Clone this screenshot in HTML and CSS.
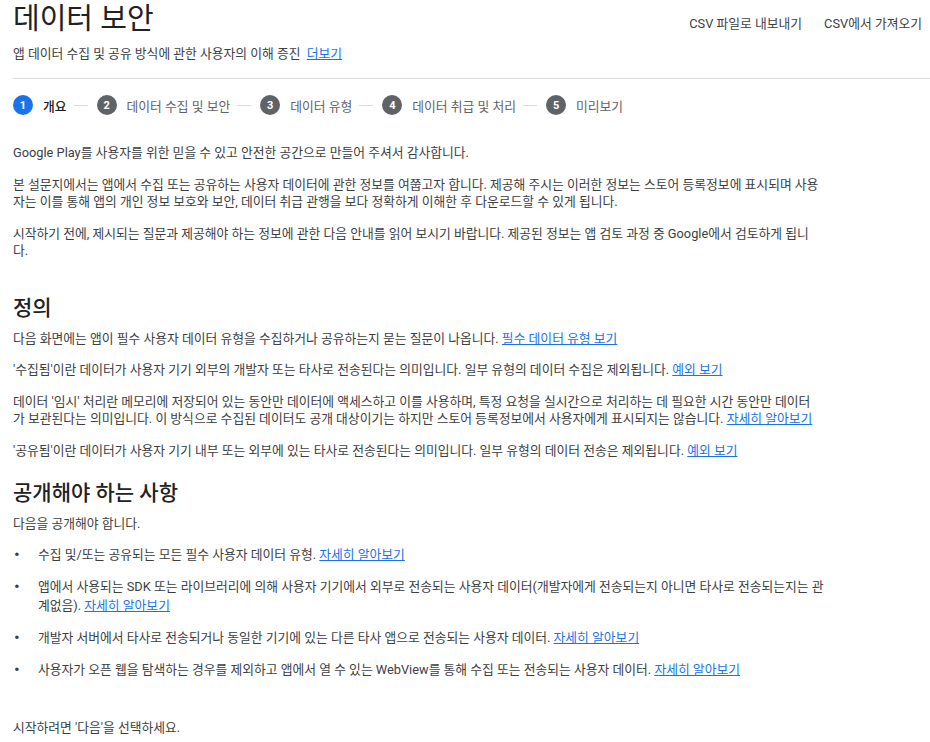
FILE: index.html
```html
<!DOCTYPE html>
<html lang="ko">
<head>
    <meta charset="UTF-8">
    <meta name="viewport" content="width=device-width, initial-scale=1.0">
    <title>데이터 보안</title>
    <link rel="stylesheet" href="styles.css">
</head>
<body>
    <div class="page">
        <header class="page-header">
            <div class="title-block">
                <h1 class="page-title">데이터 보안</h1>
                <p class="subtitle">앱 데이터 수집 및 공유 방식에 관한 사용자의 이해 증진 <a href="#">더보기</a></p>
            </div>
            <div class="header-actions">
                <a href="#" class="action-link">CSV 파일로 내보내기</a>
                <a href="#" class="action-link">CSV에서 가져오기</a>
            </div>
        </header>

        <nav class="stepper">
            <div class="step active"><span class="step-num">1</span><span class="step-label">개요</span></div>
            <span class="step-line"></span>
            <div class="step"><span class="step-num">2</span><span class="step-label">데이터 수집 및 보안</span></div>
            <span class="step-line"></span>
            <div class="step"><span class="step-num">3</span><span class="step-label">데이터 유형</span></div>
            <span class="step-line"></span>
            <div class="step"><span class="step-num">4</span><span class="step-label">데이터 취급 및 처리</span></div>
            <span class="step-line"></span>
            <div class="step"><span class="step-num">5</span><span class="step-label">미리보기</span></div>
        </nav>

        <main class="content">
            <p>Google Play를 사용자를 위한 믿을 수 있고 안전한 공간으로 만들어 주셔서 감사합니다.</p>
            <p>본 설문지에서는 앱에서 수집 또는 공유하는 사용자 데이터에 관한 정보를 여쭙고자 합니다. 제공해 주시는 이러한 정보는 스토어 등록정보에 표시되며 사용자는 이를 통해 앱의 개인 정보 보호와 보안, 데이터 취급 관행을 보다 정확하게 이해한 후 다운로드할 수 있게 됩니다.</p>
            <p>시작하기 전에, 제시되는 질문과 제공해야 하는 정보에 관한 다음 안내를 읽어 보시기 바랍니다. 제공된 정보는 앱 검토 과정 중 Google에서 검토하게 됩니다.</p>

            <h2 class="section-title first">정의</h2>
            <p>다음 화면에는 앱이 필수 사용자 데이터 유형을 수집하거나 공유하는지 묻는 질문이 나옵니다. <a href="#">필수 데이터 유형 보기</a></p>
            <p>'수집됨'이란 데이터가 사용자 기기 외부의 개발자 또는 타사로 전송된다는 의미입니다. 일부 유형의 데이터 수집은 제외됩니다. <a href="#">예외 보기</a></p>
            <p>데이터 '임시' 처리란 메모리에 저장되어 있는 동안만 데이터에 액세스하고 이를 사용하며, 특정 요청을 실시간으로 처리하는 데 필요한 시간 동안만 데이터가 보관된다는 의미입니다. 이 방식으로 수집된 데이터도 공개 대상이기는 하지만 스토어 등록정보에서 사용자에게 표시되지는 않습니다. <a href="#">자세히 알아보기</a></p>
            <p>'공유됨'이란 데이터가 사용자 기기 내부 또는 외부에 있는 타사로 전송된다는 의미입니다. 일부 유형의 데이터 전송은 제외됩니다. <a href="#">예외 보기</a></p>

            <h2 class="section-title">공개해야 하는 사항</h2>
            <p class="list-intro">다음을 공개해야 합니다.</p>
            <ul class="bullets">
                <li><span>수집 및/또는 공유되는 모든 필수 사용자 데이터 유형. <a href="#">자세히 알아보기</a></span></li>
                <li><span>앱에서 사용되는 SDK 또는 라이브러리에 의해 사용자 기기에서 외부로 전송되는 사용자 데이터(개발자에게 전송되는지 아니면 타사로 전송되는지는 관계없음). <a href="#">자세히 알아보기</a></span></li>
                <li><span>개발자 서버에서 타사로 전송되거나 동일한 기기에 있는 다른 타사 앱으로 전송되는 사용자 데이터. <a href="#">자세히 알아보기</a></span></li>
                <li><span>사용자가 오픈 웹을 탐색하는 경우를 제외하고 앱에서 열 수 있는 WebView를 통해 수집 또는 전송되는 사용자 데이터. <a href="#">자세히 알아보기</a></span></li>
            </ul>

            <p class="closing">시작하려면 '다음'을 선택하세요.</p>
        </main>
    </div>
</body>
</html>
```

FILE: styles.css
```css
body {
    margin: 0;
    font-family: Roboto, "Noto Sans CJK KR", sans-serif;
    color: #3c4043;
    background-color: #fff;
}
a {
    color: #1a73e8;
}
.page {
    padding: 0 0 0 13px;
}
.page-header {
    display: flex;
    justify-content: space-between;
    align-items: flex-start;
    padding-right: 8px;
    padding-bottom: 15px;
    border-bottom: 1px solid #dadce0;
}
.page-title {
    margin: 0;
    padding-top: 1px;
    font-size: 29px;
    font-weight: 400;
    line-height: 36px;
    color: #202124;
}
.subtitle {
    margin: 8px 0 0;
    font-size: 12.8px;
    line-height: 18px;
    color: #3c4043;
}
.subtitle a {
    margin-left: 3px;
}
.header-actions {
    display: flex;
    gap: 22px;
    padding-top: 13px;
}
.action-link {
    color: #3c4043;
    text-decoration: none;
    font-size: 12.8px;
}
.stepper {
    display: flex;
    align-items: center;
    padding: 16px 0;
}
.step {
    display: flex;
    align-items: center;
    gap: 10px;
}
.step-num {
    width: 20px;
    height: 20px;
    border-radius: 50%;
    background-color: #5f6368;
    color: #fff;
    font-size: 11px;
    font-weight: 700;
    display: flex;
    align-items: center;
    justify-content: center;
}
.step-label {
    font-size: 12.8px;
    color: #5f6368;
}
.step.active .step-num {
    background-color: #1a73e8;
}
.step.active .step-label {
    color: #202124;
    font-weight: 500;
}
.step-line {
    width: 14px;
    height: 1px;
    background-color: #dadce0;
    margin: 0 9px 0 7px;
}
.content {
    width: 808px;
    padding-top: 13px;
    font-size: 12.8px;
    line-height: 17.5px;
}
.content p {
    margin: 0 0 14px;
}
.content .list-intro {
    margin-bottom: 12px;
}
.section-title {
    margin: 20px 0 8px;
    font-size: 21px;
    font-weight: 500;
    line-height: 28px;
    color: #202124;
}
.section-title.first {
    margin-top: 34px;
}
.bullets {
    margin: 0 -6px 0 0;
    padding: 0;
    list-style: none;
}
.bullets li {
    display: flex;
    margin-bottom: 13px;
    line-height: 19px;
}
.bullets li::before {
    content: "•";
    flex: 0 0 24px;
    padding-left: 1px;
    font-size: 17px;
    color: #3c4043;
}
.content .closing {
    margin-top: 40px;
}
```
